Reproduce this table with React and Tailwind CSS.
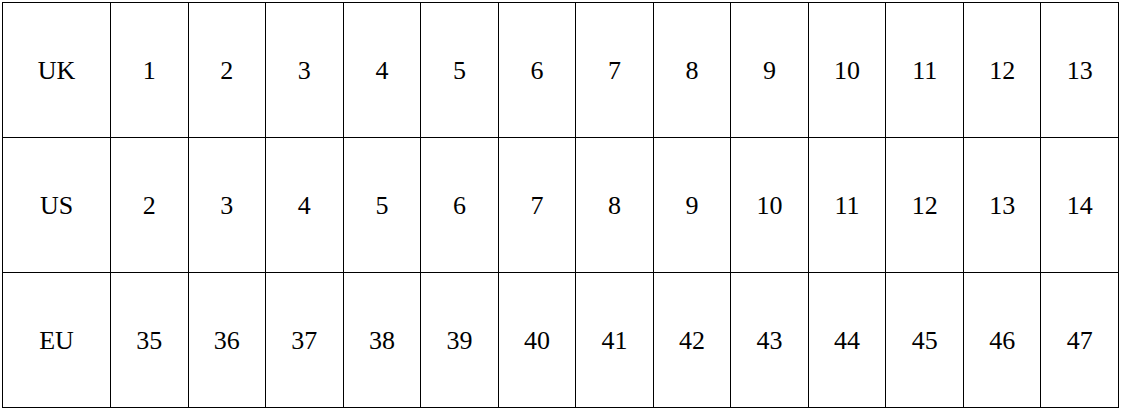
import React from 'react';

const rows = [
  { label: 'UK', values: [1, 2, 3, 4, 5, 6, 7, 8, 9, 10, 11, 12, 13] },
  { label: 'US', values: [2, 3, 4, 5, 6, 7, 8, 9, 10, 11, 12, 13, 14] },
  { label: 'EU', values: [35, 36, 37, 38, 39, 40, 41, 42, 43, 44, 45, 46, 47] },
];

export default function App() {
  return (
    <div className="w-[1122px] h-[411px] bg-white pt-[2px] pl-[2px]">
      <div
        className="grid grid-cols-[107px_repeat(13,1fr)] grid-rows-[repeat(3,134px)] gap-px p-px bg-black w-[1117px] text-[26px] text-black"
        style={{ fontFamily: '"Liberation Serif", "Times New Roman", serif' }}
      >
        {rows.map(row => (
          <React.Fragment key={row.label}>
            <div className="bg-white flex items-center justify-center">{row.label}</div>
            {row.values.map((v, i) => (
              <div key={i} className="bg-white flex items-center justify-center">{v}</div>
            ))}
          </React.Fragment>
        ))}
      </div>
    </div>
  );
}
